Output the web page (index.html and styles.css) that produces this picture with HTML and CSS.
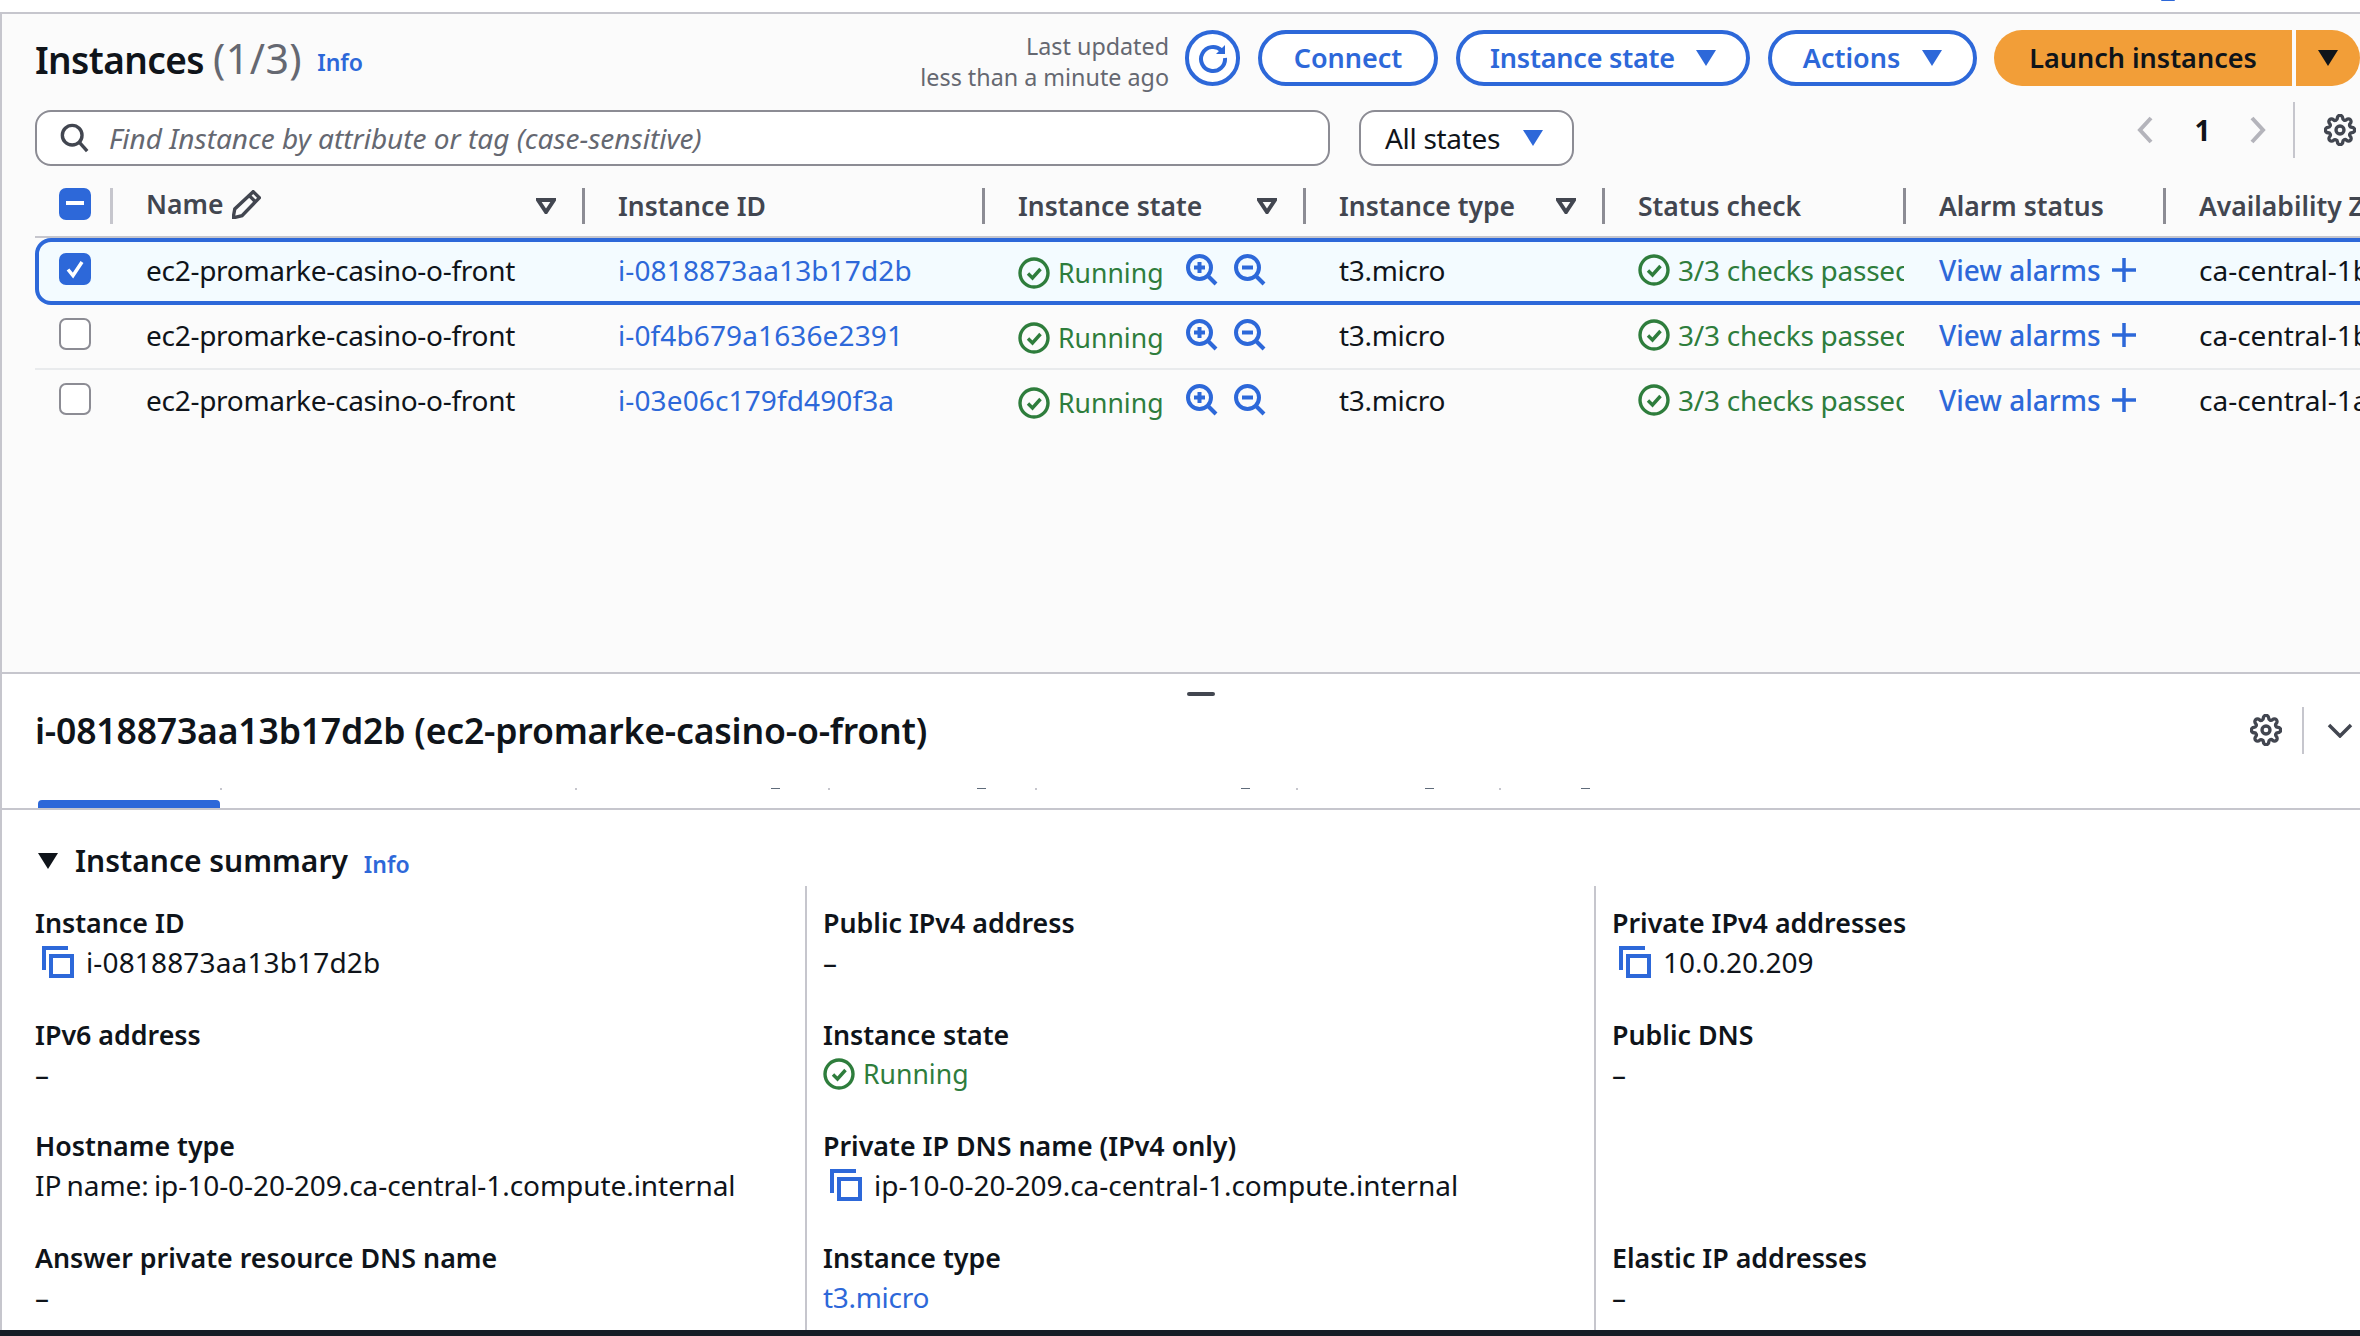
FILE: index.html
```html
<!DOCTYPE html>
<html lang="en">
<head>
<meta charset="utf-8">
<title>Instances</title>
<link rel="stylesheet" href="styles.css">
</head>
<body>
<svg class="defs" width="0" height="0" aria-hidden="true">
  <symbol id="gear" viewBox="0 0 24 24"><circle cx="12" cy="12" r="3"/><path d="M19.4 15a1.65 1.65 0 0 0 .33 1.82l.06.06a2 2 0 0 1 0 2.83 2 2 0 0 1-2.83 0l-.06-.06a1.65 1.65 0 0 0-1.82-.33 1.65 1.65 0 0 0-1 1.51V21a2 2 0 0 1-2 2 2 2 0 0 1-2-2v-.09A1.65 1.65 0 0 0 9 19.4a1.65 1.65 0 0 0-1.82.33l-.06.06a2 2 0 0 1-2.83 0 2 2 0 0 1 0-2.83l.06-.06a1.65 1.65 0 0 0 .33-1.82 1.65 1.65 0 0 0-1.51-1H3a2 2 0 0 1-2-2 2 2 0 0 1 2-2h.09A1.65 1.65 0 0 0 4.6 9a1.65 1.65 0 0 0-.33-1.82l-.06-.06a2 2 0 0 1 0-2.83 2 2 0 0 1 2.83 0l.06.06a1.65 1.65 0 0 0 1.82.33H9a1.65 1.65 0 0 0 1-1.51V3a2 2 0 0 1 2-2 2 2 0 0 1 2 2v.09a1.65 1.65 0 0 0 1 1.51 1.65 1.65 0 0 0 1.82-.33l.06-.06a2 2 0 0 1 2.83 0 2 2 0 0 1 0 2.83l-.06.06a1.65 1.65 0 0 0-.33 1.82V9a1.65 1.65 0 0 0 1.51 1H21a2 2 0 0 1 2 2 2 2 0 0 1-2 2h-.09a1.65 1.65 0 0 0-1.51 1z"/></symbol>
  <symbol id="ok" viewBox="0 0 32 32"><circle cx="16" cy="16" r="14"/><path class="okmark" d="M10 16.500l4.500 4.500 8-9"/></symbol>
  <symbol id="zin" viewBox="0 0 32 32"><circle cx="13.500" cy="13.500" r="11.500"/><path d="M22 22l8 8"/><path d="M13.500 8v11M8 13.500h11"/></symbol>
  <symbol id="zout" viewBox="0 0 32 32"><circle cx="13.500" cy="13.500" r="11.500"/><path d="M22 22l8 8"/><path d="M8 13.500h11"/></symbol>
  <symbol id="copy" viewBox="0 0 32 32"><path d="M26 2H2v22"/><rect x="9" y="10" width="21" height="20"/></symbol>
  <symbol id="tri" viewBox="0 0 20 16"><path d="M0 0h20L10 16z"/></symbol>
  <symbol id="filter" viewBox="0 0 20 16"><path d="M2 2h16l-8 12z"/></symbol>
</svg>

<div class="topstrip"><span class="topdot"></span></div>

<section class="upper">
  <header class="toolbar">
    <h1 class="title">Instances <span class="count">(1/3)</span></h1>
    <a class="info info-title">Info</a>
    <div class="actions">
      <div class="updated"><div>Last updated</div><div>less than a minute ago</div></div>
      <button class="btn btn-refresh" aria-label="Refresh">
        <svg class="ico-refresh" viewBox="0 0 32 32"><path d="M24.500 8.500A12 12 0 1 0 28 16"/><path class="solid" d="M28 3v9h-9z"/></svg>
      </button>
      <button class="btn btn-connect">Connect</button>
      <button class="btn btn-state">Instance state<svg class="caret"><use href="#tri"/></svg></button>
      <button class="btn btn-actions">Actions<svg class="caret"><use href="#tri"/></svg></button>
      <div class="launch">
        <button class="launch-main">Launch instances</button>
        <button class="launch-more" aria-label="More"><svg class="caret caret-dark"><use href="#tri"/></svg></button>
      </div>
    </div>
  </header>

  <div class="filters">
    <div class="search">
      <svg class="ico-search" viewBox="0 0 32 32"><circle cx="13" cy="13" r="10.500"/><path d="M20.500 20.500L29 30"/></svg>
      <span class="placeholder">Find Instance by attribute or tag (case-sensitive)</span>
    </div>
    <div class="states"><span class="states-label">All states</span><svg class="caret"><use href="#tri"/></svg></div>
    <div class="pager">
      <svg class="chev" viewBox="0 0 16 28"><path d="M14 2L3 14l11 12"/></svg>
      <span class="page-num">1</span>
      <svg class="chev" viewBox="0 0 16 28"><path d="M2 2l11 12L2 26"/></svg>
      <span class="pager-sep"></span>
      <svg class="gear"><use href="#gear"/></svg>
    </div>
  </div>

  <div class="table">
    <div class="row head">
      <div class="cell c-check"><span class="check indeterminate"></span></div>
      <div class="cell c-name">Name<svg class="pencil" viewBox="2 2 26 26"><path d="M21 3.500l5.500 5.500L11 25l-8 2 1.500-8z"/><path d="M17.500 7l5.500 5.500"/></svg><svg class="sort"><use href="#filter"/></svg></div>
      <div class="cell c-id">Instance ID</div>
      <div class="cell c-state">Instance state<svg class="sort"><use href="#filter"/></svg></div>
      <div class="cell c-type">Instance type<svg class="sort"><use href="#filter"/></svg></div>
      <div class="cell c-status">Status check</div>
      <div class="cell c-alarm">Alarm status</div>
      <div class="cell c-az">Availability Zone</div>
    </div>

    <div class="row item selected">
      <div class="cell c-check"><span class="check checked"><svg viewBox="0 0 32 32"><path d="M9 16.500l5 6L23 9"/></svg></span></div>
      <div class="cell c-name">ec2-promarke-casino-o-front</div>
      <div class="cell c-id"><a class="link">i-0818873aa13b17d2b</a></div>
      <div class="cell c-state"><svg class="ok"><use href="#ok"/></svg><span class="running">Running</span><svg class="zoomi first"><use href="#zin"/></svg><svg class="zoomi"><use href="#zout"/></svg></div>
      <div class="cell c-type">t3.micro</div>
      <div class="cell c-status"><svg class="ok"><use href="#ok"/></svg><span class="passed">3/3 checks passed</span></div>
      <div class="cell c-alarm"><a class="link alarm-link">View alarms</a><svg class="plus" viewBox="0 0 26 26"><path d="M13 1v24M1 13h24"/></svg></div>
      <div class="cell c-az">ca-central-1b</div>
    </div>

    <div class="row item">
      <div class="cell c-check"><span class="check"></span></div>
      <div class="cell c-name">ec2-promarke-casino-o-front</div>
      <div class="cell c-id"><a class="link">i-0f4b679a1636e2391</a></div>
      <div class="cell c-state"><svg class="ok"><use href="#ok"/></svg><span class="running">Running</span><svg class="zoomi first"><use href="#zin"/></svg><svg class="zoomi"><use href="#zout"/></svg></div>
      <div class="cell c-type">t3.micro</div>
      <div class="cell c-status"><svg class="ok"><use href="#ok"/></svg><span class="passed">3/3 checks passed</span></div>
      <div class="cell c-alarm"><a class="link alarm-link">View alarms</a><svg class="plus" viewBox="0 0 26 26"><path d="M13 1v24M1 13h24"/></svg></div>
      <div class="cell c-az">ca-central-1b</div>
    </div>

    <div class="row item ruled">
      <div class="cell c-check"><span class="check"></span></div>
      <div class="cell c-name">ec2-promarke-casino-o-front</div>
      <div class="cell c-id"><a class="link">i-03e06c179fd490f3a</a></div>
      <div class="cell c-state"><svg class="ok"><use href="#ok"/></svg><span class="running">Running</span><svg class="zoomi first"><use href="#zin"/></svg><svg class="zoomi"><use href="#zout"/></svg></div>
      <div class="cell c-type">t3.micro</div>
      <div class="cell c-status"><svg class="ok"><use href="#ok"/></svg><span class="passed">3/3 checks passed</span></div>
      <div class="cell c-alarm"><a class="link alarm-link">View alarms</a><svg class="plus" viewBox="0 0 26 26"><path d="M13 1v24M1 13h24"/></svg></div>
      <div class="cell c-az">ca-central-1a</div>
    </div>
  </div>
</section>

<section class="lower">
  <div class="handle"></div>
  <div class="detail-head">
    <h2 class="detail-title">i-0818873aa13b17d2b (ec2-promarke-casino-o-front)</h2>
    <svg class="gear"><use href="#gear"/></svg>
    <span class="detail-sep"></span>
    <svg class="chev-down" viewBox="0 0 26 15"><path d="M2 2l11 11L24 2"/></svg>
  </div>
  <div class="tabs">
    <svg class="tab-specks" width="2358" height="2" viewBox="0 0 2358 2">
      <rect x="218" width="2" height="2" fill="#c6c6cd"/><rect x="573" width="2" height="2" fill="#c6c6cd"/>
      <rect x="769" width="9" height="1" fill="#5f6b7a"/><rect x="826" width="2" height="2" fill="#c6c6cd"/>
      <rect x="975" width="9" height="1" fill="#5f6b7a"/><rect x="1033" width="2" height="2" fill="#c6c6cd"/>
      <rect x="1239" width="9" height="1" fill="#5f6b7a"/><rect x="1294" width="2" height="2" fill="#c6c6cd"/>
      <rect x="1423" width="9" height="1" fill="#5f6b7a"/><rect x="1497" width="2" height="2" fill="#c6c6cd"/>
      <rect x="1579" width="9" height="1" fill="#5f6b7a"/>
    </svg>
    <div class="tab-active"></div>
  </div>
  <div class="summary-head">
    <svg class="caret caret-dark"><use href="#tri"/></svg>
    <h3 class="summary-title">Instance summary</h3>
    <a class="info info-summary">Info</a>
  </div>
  <div class="summary">
    <div class="col">
      <div class="kv"><div class="k">Instance ID</div><div class="v copyable"><svg class="copy"><use href="#copy"/></svg><span class="mono-wide">i-0818873aa13b17d2b</span></div></div>
      <div class="kv"><div class="k">IPv6 address</div><div class="v">–</div></div>
      <div class="kv"><div class="k">Hostname type</div><div class="v host">IP name: ip-10-0-20-209.ca-central-1.compute.internal</div></div>
      <div class="kv"><div class="k">Answer private resource DNS name</div><div class="v">–</div></div>
    </div>
    <div class="col col-b">
      <div class="kv"><div class="k">Public IPv4 address</div><div class="v">–</div></div>
      <div class="kv"><div class="k">Instance state</div><div class="v"><svg class="ok ok-small"><use href="#ok"/></svg><span class="running-plain">Running</span></div></div>
      <div class="kv"><div class="k">Private IP DNS name (IPv4 only)</div><div class="v copyable"><svg class="copy"><use href="#copy"/></svg>ip-10-0-20-209.ca-central-1.compute.internal</div></div>
      <div class="kv"><div class="k">Instance type</div><div class="v"><a class="link type-link">t3.micro</a></div></div>
    </div>
    <div class="col col-b">
      <div class="kv"><div class="k">Private IPv4 addresses</div><div class="v copyable"><svg class="copy"><use href="#copy"/></svg>10.0.20.209</div></div>
      <div class="kv"><div class="k">Public DNS</div><div class="v">–</div></div>
      <div class="kv"></div>
      <div class="kv"><div class="k">Elastic IP addresses</div><div class="v">–</div></div>
    </div>
  </div>
</section>
<div class="bottombar"></div>
</body>
</html>
```

FILE: styles.css
```css
* { box-sizing: border-box; }
html, body { margin: 0; padding: 0; }
body {
  width: 2360px; height: 1336px; overflow: hidden; background: #fff; color: #0f141a;
  font-family: "Noto Sans", "Liberation Sans", sans-serif; font-size: 28px; line-height: 36px;
  display: flex; flex-direction: column;
}
h1, h2, h3 { margin: 0; }
a { color: #2d68d9; }
button { font: inherit; background: none; padding: 0; cursor: pointer; }
.defs { position: absolute; }

.topstrip { height: 12px; flex: none; display: flex; }
.topdot { width: 14px; height: 1px; margin-left: 2161px; background: #2d68d9; border-radius: 0 0 7px 7px; }

.upper { height: 662px; flex: none; background: #fbfbfb; border-top: 2px solid #c6c6cd; border-bottom: 2px solid #c6c6cd; border-left: 2px solid #c6c6cd; padding-top: 16px; }
.toolbar { display: flex; align-items: center; height: 56px; padding-left: 33px; }
.title { font-size: 37px; line-height: 56px; font-weight: 600; letter-spacing: -.6px; margin-top: 1px; white-space: nowrap; }
.count { color: #656871; font-weight: 400; font-size: 41px; letter-spacing: .5px; }
.info { font-size: 23px; font-weight: 600; }
.info-title { margin-left: 15px; margin-top: 8px; }
.actions { margin-left: auto; display: flex; align-items: center; }
.updated { color: #656871; font-size: 23.300px; line-height: 31px; text-align: right; margin: 8px 16px 0 0; }
.btn { height: 56px; border: 4px solid #2d68d9; border-radius: 28px; background: #fff; color: #2d68d9; font-weight: 600; display: flex; align-items: center; justify-content: center; font-size: 27px; }
.btn-refresh { width: 55px; }
.ico-refresh { width: 32px; height: 32px; fill: none; stroke: #2d68d9; stroke-width: 4; }
.ico-refresh .solid { fill: #2d68d9; stroke: none; }
.btn-connect { width: 180px; margin-left: 18px; }
.btn-state { width: 294px; margin-left: 18px; letter-spacing: -.2px; justify-content: flex-start; padding-left: 30px; }
.btn-state .caret { margin-left: 21px; }
.btn-actions { width: 209px; margin-left: 18px; }
.caret { width: 20px; height: 16px; fill: #2d68d9; margin-left: 22px; flex: none; }
.caret-dark { fill: #0f141a; margin-left: 0; }
.launch { display: flex; margin-left: 17px; height: 56px; }
.launch-main { width: 298px; border: 0; background: #f29e38; border-radius: 28px 0 0 28px; font-weight: 600; font-size: 27px; color: #0f141a; }
.launch-more { width: 64px; margin-left: 4px; border: 0; background: #f29e38; border-radius: 0 28px 28px 0; display: flex; align-items: center; justify-content: center; }

.filters { display: flex; margin-top: 24px; padding-left: 33px; height: 56px; }
.search { width: 1295px; height: 56px; border: 2px solid #8c8c94; border-radius: 16px; background: #fff; display: flex; align-items: center; padding-left: 23px; }
.ico-search { width: 30px; height: 32px; fill: none; stroke: #424650; stroke-width: 3.600; flex: none; }
.placeholder { font-style: italic; color: #656871; margin-left: 19px; }
.states { width: 215px; height: 56px; margin-left: 29px; border: 2px solid #8c8c94; border-radius: 16px; background: #fff; display: flex; align-items: center; padding-left: 24px; }
.states-label { letter-spacing: -.3px; }
.states .caret { margin-left: 23px; }
.pager { margin-left: auto; margin-top: -8px; height: 56px; display: flex; align-items: center; padding-right: 4px; }
.chev { width: 16px; height: 28px; fill: none; stroke: #b4b4bb; stroke-width: 4; }
.page-num { width: 97px; text-align: center; font-weight: 700; padding-left: 2px; }
.pager-sep { width: 2px; height: 56px; background: #c6c6cd; margin-left: 27px; margin-right: 29px; }
.gear { width: 32px; height: 32px; fill: none; stroke: #424650; stroke-width: 2.500; flex: none; }

.table { margin-top: 22px; padding-left: 33px; width: 2600px; }
.row { display: grid; grid-template-columns: 78px 472px 400px 321px 299px 301px 260px 1fr; align-items: center; }
.head { height: 50px; color: #424650; font-weight: 600; border-bottom: 2px solid #c6c6cd; align-items: start; font-size: 26.500px; }
.head .cell { height: 36px; display: flex; align-items: center; border-right: 3px solid #8c8c94; }
.head .c-check { border-right-color: #c6c6cd; align-items: flex-start; }
.head .c-name { padding-bottom: 4px; }
.head .c-az { border-right: 0; }
.head .sort { margin-left: auto; margin-right: 26px; }
.head .c-name .sort { margin-top: 4px; }
.sort { width: 20px; height: 16px; fill: none; stroke: #424650; stroke-width: 4; flex: none; }
.pencil { width: 29px; height: 29px; margin-left: 9px; fill: none; stroke: #424650; stroke-width: 3; flex: none; }
.cell { min-width: 0; white-space: nowrap; padding-left: 33px; }
.c-check { padding-left: 24px; }
.item { height: 63px; padding-bottom: 3px; }
.item .cell { display: flex; align-items: center; }
.item .c-check { padding-bottom: 3px; }
.item.selected { height: 67px; padding-bottom: 3px; background: #f3fbff; box-shadow: inset 0 0 0 4px #2d68d9; border-radius: 16px; }
.item.ruled { height: 65px; border-top: 2px solid #e9ebed; }
.item .c-name { letter-spacing: -.28px; }
.item .c-id .link { letter-spacing: .12px; }
.item .c-type { letter-spacing: -.3px; }
.check { display: block; width: 32px; height: 32px; border-radius: 7px; border: 2px solid #8c8c94; background: #fff; position: relative; }
.check.checked, .check.indeterminate { background: #2d68d9; border-color: #2d68d9; }
.check.checked svg { position: absolute; left: -2px; top: -2px; width: 32px; height: 32px; fill: none; stroke: #fff; stroke-width: 3.500; }
.check.indeterminate::after { content: ""; position: absolute; left: 5px; right: 5px; top: 11px; height: 4px; background: #fff; }
.ok { width: 32px; height: 32px; fill: none; stroke: #2e7d3c; stroke-width: 3.400; flex: none; }
.c-state .ok { margin-top: 5px; }
.running { color: #2e7d3c; margin-left: 8px; margin-top: 6px; font-size: 26.600px; }
.zoomi { width: 32px; height: 32px; fill: none; stroke: #2d68d9; stroke-width: 4; margin-left: 16px; margin-top: -1px; flex: none; }
.zoomi.first { margin-left: 22px; }
.passed { color: #2e7d3c; margin-left: 8px; letter-spacing: -.25px; overflow: hidden; }
.item .c-status { width: 299px; }
.alarm-link { font-weight: 500; }
.plus { width: 26px; height: 26px; margin-left: 10px; fill: none; stroke: #2d68d9; stroke-width: 3.500; flex: none; }

.lower { flex: 1; min-height: 0; overflow: hidden; border-left: 2px solid #c6c6cd; background: #fff; }
.handle { width: 28px; height: 4px; border-radius: 2px; background: #424650; margin: 18px 0 0 1185px; }
.detail-head { height: 68px; display: flex; align-items: center; padding-left: 33px; }
.detail-title { font-size: 35.600px; line-height: 44px; font-weight: 600; letter-spacing: -.2px; }
.detail-head .gear { margin-left: auto; }
.detail-sep { width: 2px; height: 47px; background: #c6c6cd; margin: 0 23px 0 20px; }
.chev-down { width: 26px; height: 15px; fill: none; stroke: #424650; stroke-width: 3.500; margin-right: 7px; }
.tabs { height: 46px; padding-top: 24px; border-bottom: 2px solid #c6c6cd; background: linear-gradient(#fff, #fff) left bottom / 32px 2px no-repeat; }
.tab-specks { display: block; }
.tab-active { width: 182px; height: 8px; margin: 10px 0 0 36px; background: #2d68d9; border-radius: 4px 4px 0 0; }
.summary-head { height: 50px; margin-top: 26px; display: flex; align-items: center; padding-left: 36px; }
.summary-title { font-size: 30px; line-height: 40px; font-weight: 600; margin-left: 17px; }
.info-summary { margin-left: 16px; margin-top: 6px; }
.summary { display: grid; grid-template-columns: 770px 789px 1fr; height: 444px; padding-left: 33px; }
.col { padding-top: 19px; }
.col-b { border-left: 2px solid #c6c6cd; padding-left: 16px; }
.kv { height: 111.700px; }
.k { font-weight: 600; line-height: 36px; font-size: 26.800px; }
.v { line-height: 42px; display: flex; align-items: center; white-space: nowrap; }
.host { word-spacing: -2px; letter-spacing: -.06px; }
.mono-wide { letter-spacing: .15px; }
.copy { width: 32px; height: 32px; fill: none; stroke: #2d68d9; stroke-width: 4; margin: 0 12px 0 7px; flex: none; }
.ok-small { margin-right: 8px; }
.running-plain { color: #2e7d3c; font-size: 26.600px; }
.type-link { letter-spacing: -.3px; }
.bottombar { height: 6px; flex: none; background: #161d26; }
```
